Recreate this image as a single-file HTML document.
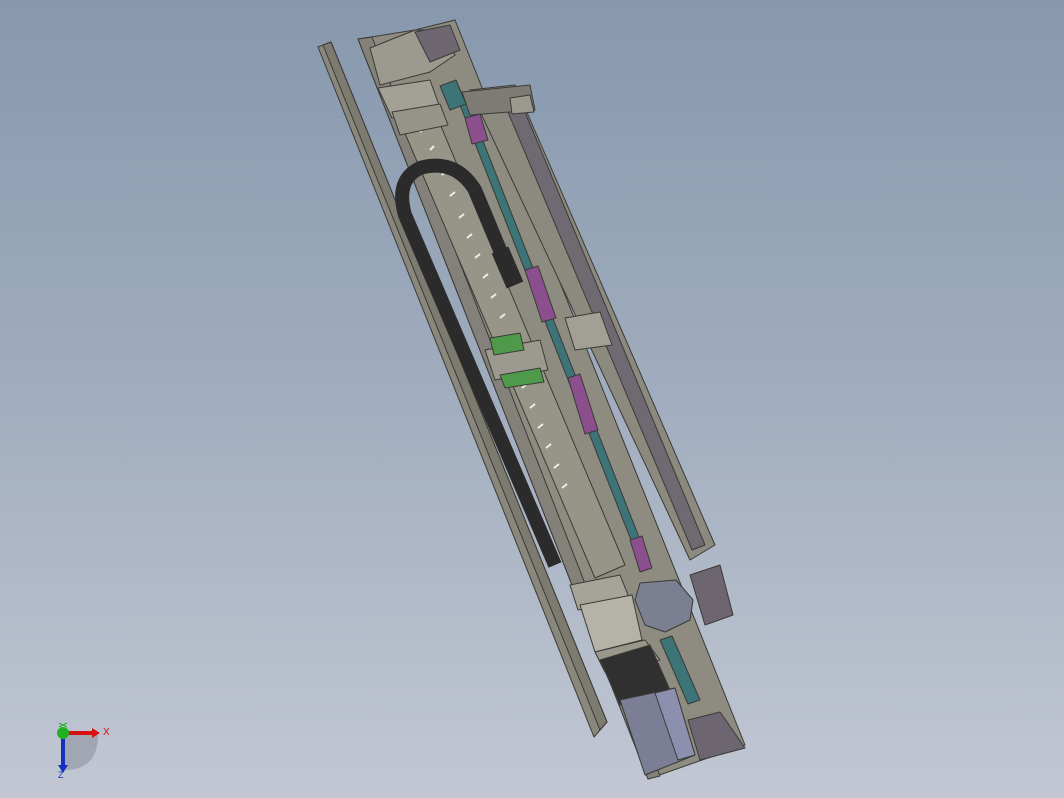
<!DOCTYPE html>
<html><head><meta charset="utf-8"><style>
html,body{margin:0;padding:0;}
body{width:1064px;height:798px;overflow:hidden;background:linear-gradient(180deg,#8798ad 0%,#9eabbd 45%,#c2c7d3 100%);}
svg{position:absolute;left:0;top:0;}
</style></head><body>
<svg width="1064" height="798" viewBox="0 0 1064 798" xmlns="http://www.w3.org/2000/svg">
<g stroke="#3a3a36" stroke-width="1" stroke-linejoin="round">
<!-- left thin rail -->
<polygon points="318,47 331,42 607,722 594,737" fill="#8a877c"/>
<polygon points="323,45 331,42 607,722 600,730" fill="#7d7a70"/>
<!-- main plate -->
<polygon points="358,39 415,30 455,20 745,745 648,779" fill="#8e8b80"/>
<!-- base strip left -->
<polygon points="358,39 372,37 660,776 648,779" fill="#84817a"/>
<!-- right long rail body -->
<polygon points="470,90 515,85 715,545 690,560" fill="#8c897f"/>
<polygon points="505,105 520,100 705,545 692,550" fill="#6f6a72"/>
<!-- teal strip -->
<polygon points="458,100 466,98 650,565 642,568" fill="#3c7478"/>
<polygon points="660,640 672,636 700,700 688,704" fill="#3c7478"/>
<polygon points="440,86 456,80 466,104 450,110" fill="#3c7478"/>
<!-- screw section -->
<polygon points="395,110 430,100 625,565 595,578" fill="#979488"/>
<g stroke="#eee" stroke-width="2">
<line x1="420" y1="132" x2="424" y2="128"/><line x1="430" y1="150" x2="434" y2="146"/>
<line x1="442" y1="175" x2="446" y2="171"/><line x1="450" y1="196" x2="455" y2="192"/>
<line x1="459" y1="218" x2="464" y2="214"/><line x1="467" y1="238" x2="472" y2="234"/>
<line x1="475" y1="258" x2="480" y2="254"/><line x1="483" y1="278" x2="488" y2="274"/>
<line x1="491" y1="298" x2="496" y2="294"/><line x1="500" y1="318" x2="505" y2="314"/>
<line x1="522" y1="388" x2="527" y2="384"/><line x1="530" y1="408" x2="535" y2="404"/>
<line x1="538" y1="428" x2="543" y2="424"/><line x1="546" y1="448" x2="551" y2="444"/>
<line x1="554" y1="468" x2="559" y2="464"/><line x1="562" y1="488" x2="567" y2="484"/>
</g>
<!-- top block -->
<polygon points="370,48 415,30 440,30 455,55 430,72 380,85" fill="#9c998f"/>
<polygon points="415,32 450,25 460,50 430,62" fill="#6e6670"/>
<polygon points="378,88 430,80 440,108 392,118" fill="#a3a096"/>
<polygon points="392,112 440,104 448,125 400,135" fill="#969389"/>
<!-- top right fittings -->
<polygon points="462,92 530,85 535,110 470,115" fill="#7e7b74"/>
<polygon points="510,98 530,95 534,112 512,114" fill="#9a988f"/>
<!-- purple marks -->
<polygon points="465,118 480,114 488,140 472,144" fill="#8a4f8c"/>
<polygon points="525,270 538,266 556,318 542,322" fill="#8a4f8c"/>
<polygon points="568,378 580,374 598,430 585,434" fill="#8a4f8c"/>
<polygon points="630,540 642,536 652,568 640,572" fill="#8a4f8c"/>
<!-- centre carriage -->
<polygon points="565,318 600,312 612,345 575,350" fill="#a29f95"/>
<polygon points="485,350 540,340 548,370 495,380" fill="#9c998f"/>
<polygon points="490,338 520,333 524,350 494,355" fill="#4f9a4a"/>
<polygon points="500,375 540,368 544,382 505,388" fill="#4f9a4a"/>
<!-- bottom block -->
<polygon points="570,585 620,575 630,600 578,610" fill="#a6a399"/>
<polygon points="580,605 632,595 642,640 595,652" fill="#b5b2a8"/>
<polygon points="595,652 645,640 660,660 605,672" fill="#9a978d"/>
<!-- hex motor face -->
<polygon points="640,583 676,580 693,600 690,620 665,632 645,625 635,600" fill="#7a7f92"/>
<polygon points="690,575 720,565 733,615 705,625" fill="#6d6671"/>
<!-- dark block -->
<polygon points="600,660 650,645 670,690 620,705" fill="#303030"/>
<!-- motor -->
<polygon points="620,700 675,688 695,755 645,775" fill="#7b7e95"/>
<polygon points="655,693 675,688 695,755 678,760" fill="#8c8fae"/>
<polygon points="688,720 720,712 745,748 700,760" fill="#6d6671"/>
</g>
<!-- cable chain -->
<path d="M555,565 L405,215 Q395,180 420,168 Q455,158 475,190 L505,262" fill="none" stroke="#2b2b2b" stroke-width="14" stroke-linejoin="round"/>
<path d="M500,250 L515,285" stroke="#2b2b2b" stroke-width="18"/>
<!-- triad -->
<g>
<path d="M64,733 L64,770 Q98,770 98,735 Z" fill="#8e949e" opacity="0.6"/>
<line x1="64" y1="733" x2="92" y2="733" stroke="#d81010" stroke-width="4"/>
<polygon points="92,728 100,733 92,738" fill="#d81010"/>
<line x1="63" y1="733" x2="63" y2="765" stroke="#1530c0" stroke-width="4"/>
<polygon points="58,765 63,773 68,765" fill="#1530c0"/>
<circle cx="63" cy="733" r="6" fill="#22b022"/>
<line x1="59" y1="723" x2="67" y2="727" stroke="#22b022" stroke-width="1"/><line x1="67" y1="723" x2="59" y2="727" stroke="#22b022" stroke-width="1"/>
<text x="103" y="735" font-family="Liberation Sans,sans-serif" font-size="10" fill="#d81010">X</text>
<text x="58" y="778" font-family="Liberation Sans,sans-serif" font-size="9" fill="#1530c0">Z</text>
</g>
</svg>
</body></html>
